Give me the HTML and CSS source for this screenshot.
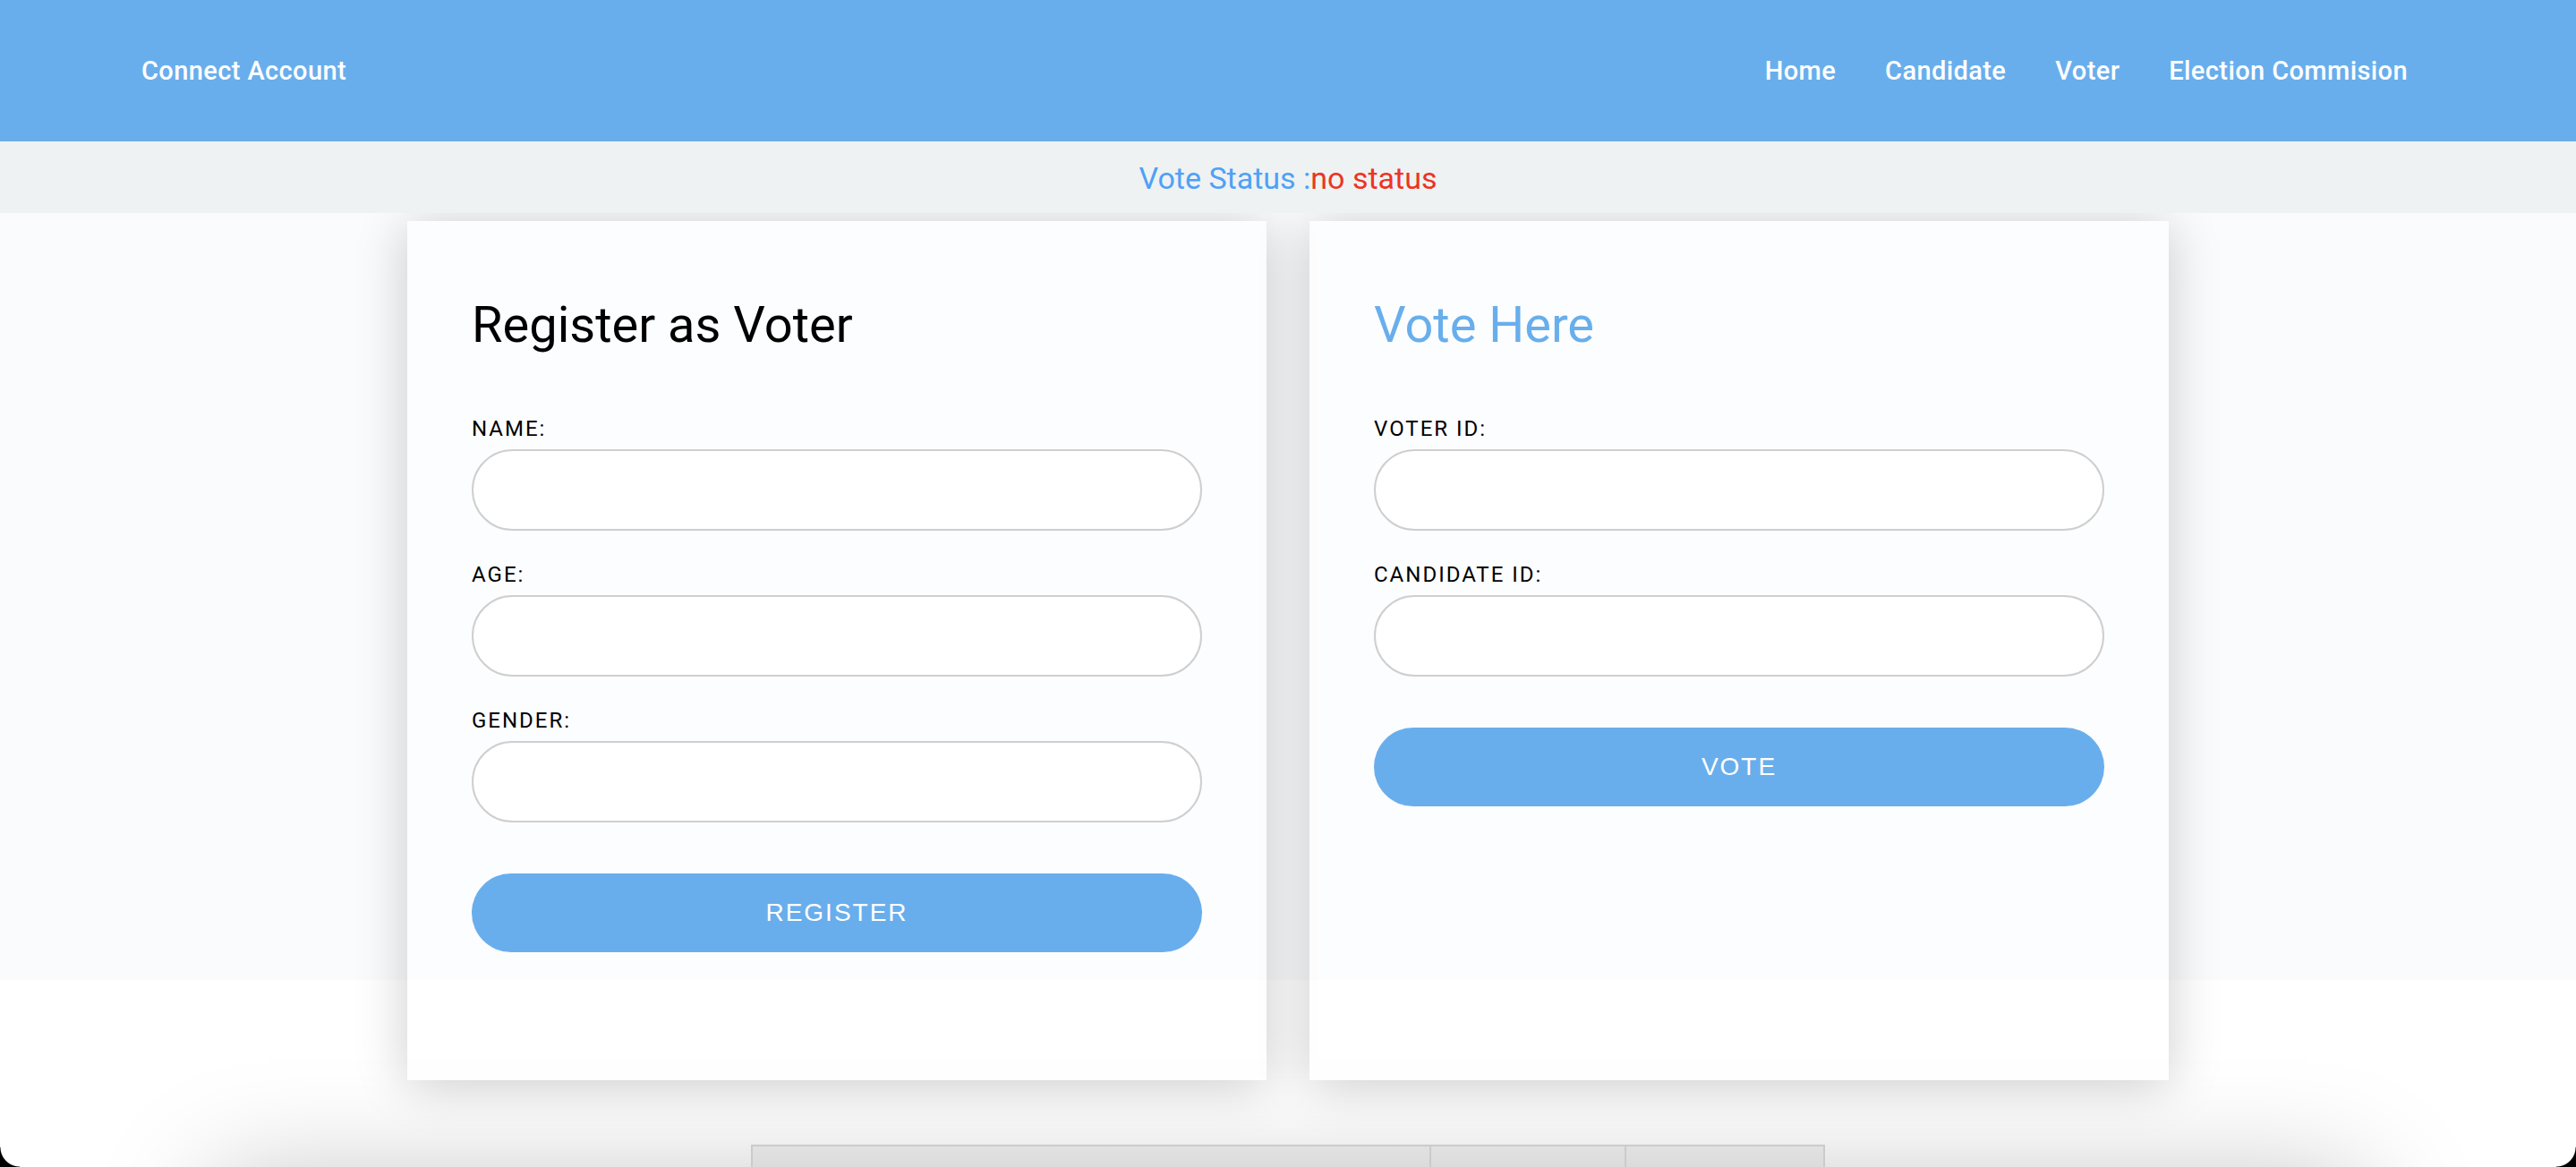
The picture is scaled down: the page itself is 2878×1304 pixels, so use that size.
FILE: index.html
```html
<!DOCTYPE html>
<html lang="en">
<head>
<meta charset="utf-8">
<title>Voting DApp</title>
<link rel="stylesheet" href="styles.css">
</head>
<body>
<header class="topbar">
  <a class="brand" href="#">Connect Account</a>
  <nav class="nav">
    <a href="#">Home</a>
    <a href="#">Candidate</a>
    <a href="#">Voter</a>
    <a href="#">Election Commision</a>
  </nav>
</header>
<div class="status">
  <span class="status-label">Vote Status :</span><span class="status-value">no status</span>
</div>
<main class="hero">
  <div class="cards">
    <section class="card">
      <h2 class="card-title">Register as Voter</h2>
      <form class="form">
        <label class="field"><span class="field-label">NAME:</span><input class="field-input" type="text"></label>
        <label class="field"><span class="field-label">AGE:</span><input class="field-input" type="text"></label>
        <label class="field"><span class="field-label">GENDER:</span><input class="field-input" type="text"></label>
        <button class="btn" type="button">REGISTER</button>
      </form>
    </section>
    <section class="card">
      <h2 class="card-title card-title-blue">Vote Here</h2>
      <form class="form">
        <label class="field"><span class="field-label">VOTER ID:</span><input class="field-input" type="text"></label>
        <label class="field"><span class="field-label">CANDIDATE ID:</span><input class="field-input" type="text"></label>
        <button class="btn" type="button">VOTE</button>
      </form>
    </section>
  </div>
</main>
<section class="results">
  <table class="tally">
    <tr><th class="col-a"></th><th class="col-b"></th><th class="col-c"></th></tr>
  </table>
  <div class="results-panel"></div>
</section>
<div class="corner corner-left"></div>
<div class="corner corner-right"></div>
</body>
</html>
```
FILE: styles.css
```css
* { box-sizing: border-box; }

html, body {
  margin: 0;
  padding: 0;
  background: #ffffff;
}

body {
  font-family: Roboto, "Liberation Sans", Arial, sans-serif;
  color: #111;
}

.topbar {
  height: 158px;
  background: #69aeec;
  display: flex;
  align-items: center;
  justify-content: space-between;
  padding: 0 188px 0 158px;
}

.brand,
.nav a {
  color: #ffffff;
  text-decoration: none;
  font-size: 29px;
  font-weight: 500;
  letter-spacing: 0.4px;
}

.nav {
  display: flex;
  gap: 55px;
}

.status {
  position: relative;
  z-index: 2;
  height: 80px;
  background: #eef2f3;
  display: flex;
  align-items: center;
  justify-content: center;
  font-size: 34px;
  padding-top: 2px;
}

.status-label { color: #4ea1f5; }
.status-value { color: #ee3322; }

.hero {
  height: 857px;
  background: #fafbfd;
  padding-top: 9px;
}

.cards {
  display: grid;
  grid-template-columns: 960px 960px;
  gap: 48px;
  justify-content: center;
}

.card {
  position: relative;
  z-index: 1;
  min-height: 960px;
  background: rgba(255, 255, 255, 0.45);
  padding: 82px 72px 0;
  box-shadow: 0 5px 55px rgba(0, 0, 0, 0.2);
}

.card-title {
  margin: 0 0 66px;
  font-size: 56px;
  line-height: 68px;
  font-weight: 400;
  color: #000;
}

.card-title-blue { color: #69aeec; }

.form {
  display: flex;
  flex-direction: column;
}

.field {
  display: flex;
  flex-direction: column;
  margin-bottom: 33px;
}

.field-label {
  font-size: 24px;
  line-height: 32px;
  letter-spacing: 2px;
  color: #000;
  margin-bottom: 7px;
}

.field-input {
  height: 91px;
  width: 100%;
  border: 2px solid #cfcfcf;
  border-radius: 46px;
  background: #ffffff;
  outline: none;
  padding: 0 32px;
  font-size: 24px;
}

.btn {
  margin-top: 24px;
  height: 88px;
  width: 100%;
  border: none;
  border-radius: 44px;
  background: #69aeec;
  color: #ffffff;
  font-family: "Liberation Sans", Arial, sans-serif;
  font-size: 28px;
  letter-spacing: 2px;
  cursor: pointer;
}

.results {
  margin-top: 184px;
}

.tally {
  position: relative;
  z-index: 1;
  width: 1200px;
  margin: 0 auto;
  border-collapse: collapse;
  border-top: 2px solid #cbcbcb;
}

.tally th {
  height: 40px;
  padding: 0;
  background: linear-gradient(#e1e1e1, #d7d7d7);
  border-left: 2px solid #cbcbcb;
  border-right: 2px solid #cbcbcb;
}

.col-a { width: 759px; }
.col-b { width: 219px; }
.col-c { width: 222px; }

.results-panel {
  margin: 0 239px;
  height: 400px;
  background: #ffffff;
  box-shadow: 0 0 120px rgba(0, 0, 0, 0.25);
}

.corner {
  position: fixed;
  bottom: 0;
  width: 22px;
  height: 22px;
  z-index: 10;
}

.corner-left {
  left: 0;
  background: radial-gradient(circle at 100% 0, transparent 21px, #000 22px);
}

.corner-right {
  right: 0;
  background: radial-gradient(circle at 0 0, transparent 21px, #000 22px);
}
```
